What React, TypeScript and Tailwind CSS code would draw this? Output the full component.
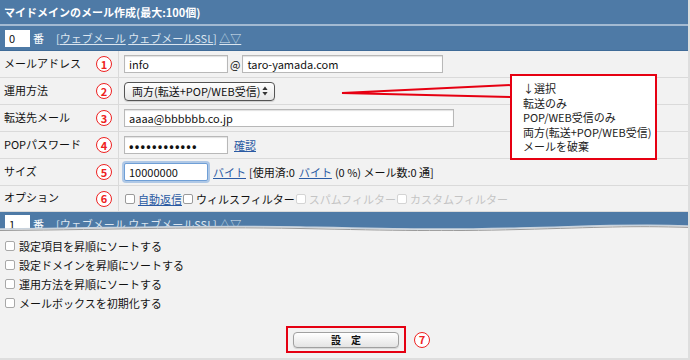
import React from 'react'

const fieldCls =
  'h-[18px] border border-[#b8b8b8] bg-white px-[4px] text-[11px] text-[#111] outline-none shadow-[inset_0_1px_1px_rgba(0,0,0,0.12)]'

function Num({ n }: { n: number }) {
  return (
    <span className="flex h-[16px] w-[16px] items-center justify-center rounded-full border border-[#ee2222] bg-white text-[11px] font-bold leading-none text-[#ee2222]">
      {n}
    </span>
  )
}

function Row({ label, n, h = 'h-[27px]', children }: { label: string; n: number; h?: string; children: React.ReactNode }) {
  return (
    <div className={`flex ${h} border-b border-[#dadada]`}>
      <div className="flex w-[119px] shrink-0 items-center justify-between border-r border-[#dadada] pl-[4px] pr-[6px]">
        <span className="-mt-[3px]">{label}</span>
        <Num n={n} />
      </div>
      <div className="flex flex-1 items-center pl-[5px]">{children}</div>
    </div>
  )
}

function Check({ label, link, disabled }: { label: string; link?: boolean; disabled?: boolean }) {
  return (
    <span className={`flex items-center ${disabled ? 'text-[#c4c4c4]' : 'text-[#111]'}`}>
      <span
        className={`mr-[3px] inline-block h-[10px] w-[10px] rounded-[2px] border bg-white ${
          disabled ? 'border-[#d4d4d4]' : 'border-[#9a9a9a]'
        }`}
      />
      <span className={link ? 'text-[#2a5aa3] underline' : ''}>{label}</span>
    </span>
  )
}

function BarContent({ no }: { no: string }) {
  return (
    <div className="flex items-center pl-[5px] text-[11px] text-white">
      <div className="flex h-[17px] w-[25px] items-center bg-white pl-[4px] text-[#111]">{no}</div>
      <span className="ml-[3px]">番</span>
      <span className="ml-[12px] text-[#dbe5ef]">
        [<span className="underline">ウェブメール</span> <span className="underline">ウェブメールSSL</span>]{' '}
        <span className="underline">△▽</span>
      </span>
    </div>
  )
}

export default function App() {
  return (
    <div className="relative h-[360px] w-[690px] overflow-hidden border-b-2 border-r-2 border-[#dedede] bg-[#f2f2f2] font-['Noto_Sans_CJK_JP',sans-serif] text-[11px] leading-[14px] text-[#111]">
      {/* header */}
      <div className="flex h-[24px] items-center bg-[#4e7aa6] pl-[4px] text-[11px] font-bold text-white">
        マイドメインのメール作成(最大:100個)
      </div>
      <div className="h-[2px] bg-[#a3bad2]" />
      <div className="flex h-[25px] items-center border-b border-[#3f6b98] bg-[#4e7aa6]">
        <BarContent no="0" />
      </div>

      <Row label="メールアドレス" n={1}>
        <input readOnly value="info" className={`${fieldCls} w-[104px]`} />
        <span className="mx-[2px]">@</span>
        <input readOnly value="taro-yamada.com" className={`${fieldCls} w-[201px]`} />
      </Row>
      <Row label="運用方法" n={2}>
        <div className="flex h-[19px] w-[151px] items-center justify-between rounded-[4px] border border-[#555] bg-gradient-to-b from-white to-[#e6e6e6] pl-[7px] pr-[6px] shadow-[0_1px_1px_rgba(0,0,0,0.15)]">
          <span>両方(転送+POP/WEB受信)</span>
          <svg width="6" height="10" viewBox="0 0 6 10">
            <path d="M3 0.5 L5.6 4 L0.4 4 Z" fill="#333" />
            <path d="M3 9.5 L5.6 6 L0.4 6 Z" fill="#333" />
          </svg>
        </div>
      </Row>
      <Row label="転送先メール" n={3}>
        <input readOnly value="aaaa@bbbbbb.co.jp" className={`${fieldCls} w-[330px]`} />
      </Row>
      <Row label="POPパスワード" n={4}>
        <input readOnly value="••••••••••••" className={`${fieldCls} w-[104px] text-[12px] font-bold tracking-[1.2px]`} />
        <span className="ml-[6px] text-[#2a5aa3] underline">確認</span>
      </Row>
      <Row label="サイズ" n={5}>
        <input
          readOnly
          value="10000000"
          className="h-[18px] w-[84px] rounded-[2px] border border-[#6f9fd6] bg-white px-[4px] text-[11px] text-[#111] outline-none shadow-[0_0_0_2px_rgba(120,165,220,0.55)]"
        />
        <span className="ml-[5px] text-[#2a5aa3] underline">バイト</span>
        <span className="ml-[3px]">[使用済:0</span>
        <span className="ml-[4px] text-[#2a5aa3] underline">バイト</span>
        <span className="ml-[3px]">(0 %) メール数:0 通]</span>
      </Row>
      <Row label="オプション" n={6} h="h-[26px]">
        <div className="flex items-center pl-[1px]">
          <Check label="自動返信" link />
          <span className="ml-[1px]" />
          <Check label="ウィルスフィルター" />
          <span className="ml-[1px]" />
          <Check label="スパムフィルター" disabled />
          <span className="ml-[1px]" />
          <Check label="カスタムフィルター" disabled />
        </div>
      </Row>

      {/* torn bar */}
      <div className="relative h-[19px] overflow-hidden bg-[#4e7aa6] pt-[3px]">
        <BarContent no="1" />
        <svg className="absolute bottom-0 left-0" width="690" height="12" viewBox="0 0 690 12" preserveAspectRatio="none">
          <path d="M0 10 C120 9 200 6 300 8 S440 11 520 9 S630 5 690 7 L690 12 L0 12 Z" fill="#f2f2f2" />
          <path d="M0 10 C120 9 200 6 300 8 S440 11 520 9 S630 5 690 7" fill="none" stroke="#c9d3dd" strokeWidth="1.5" />
          <path d="M0 11.5 C120 10.5 200 7.5 300 9.5 S440 12.5 520 10.5 S630 6.5 690 8.5" fill="none" stroke="#9a9a9a" strokeWidth="1" />
        </svg>
      </div>

      <div className="flex flex-col pl-[5px] pt-[5px]">
        {['設定項目を昇順にソートする', '設定ドメインを昇順にソートする', '運用方法を昇順にソートする', 'メールボックスを初期化する'].map((t) => (
          <div key={t} className="flex h-[19px] items-center">
            <span className="mr-[4px] inline-block h-[10px] w-[10px] rounded-[2px] border border-[#a8a8a8] bg-white" />
            <span>{t}</span>
          </div>
        ))}
      </div>

      <div className="mt-[14px] flex items-center gap-[8px] pl-[286px]">
        <div className="flex h-[27px] w-[120px] items-center justify-center border-2 border-[#e50012]">
          <div className="flex h-[16px] w-[106px] items-center justify-center rounded-[4px] border border-[#a0a0a0] bg-gradient-to-b from-white to-[#e4e4e4] text-[10px] font-bold shadow-[0_1px_1px_rgba(0,0,0,0.12)]">
            設　定
          </div>
        </div>
        <Num n={7} />
      </div>

      {/* callout */}
      <svg className="pointer-events-none absolute left-0 top-0" width="690" height="360">
        <polyline points="512,85 342,93 512,97" fill="none" stroke="#e60012" strokeWidth="2" />
      </svg>
      <div className="absolute left-[510px] top-[74px] flex h-[86px] w-[147px] flex-col border-2 border-[#e60012] bg-white pl-[11px] pt-[5px] text-[11px] leading-[14.6px] text-[#222]">
        <span>↓選択</span>
        <span>転送のみ</span>
        <span>POP/WEB受信のみ</span>
        <span>両方(転送+POP/WEB受信)</span>
        <span>メールを破棄</span>
      </div>
    </div>
  )
}
